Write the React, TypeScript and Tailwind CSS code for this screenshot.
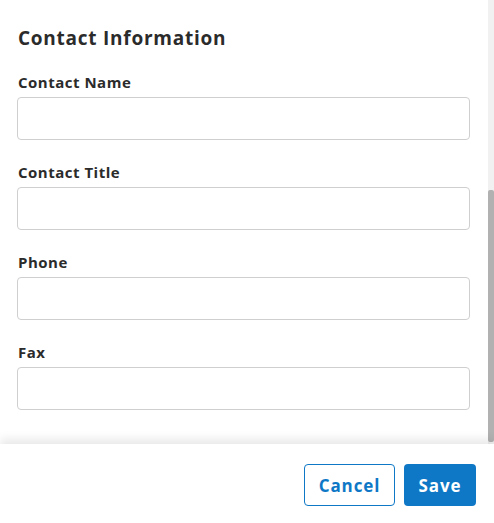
import React from 'react';

const fields = ['Contact Name', 'Contact Title', 'Phone', 'Fax'];

export default function App() {
  return (
    <div
      className="relative flex h-[523px] w-[494px] flex-col overflow-hidden bg-white text-[#2b2b2b]"
      style={{ fontFamily: '"Open Sans", Arial, sans-serif' }}
    >
      {/* scrollable body */}
      <div className="relative h-[444px] shrink-0 overflow-hidden pl-[17px] pr-[24px]">
        <h2 className="mt-[26px] pl-[1px] text-[19px] font-bold leading-[24px] tracking-[0.75px]">Contact Information</h2>
        <div className="mt-[20px]">
          {fields.map((f) => (
            <div key={f} className="pb-[20px]">
              <label className="block pl-[1px] text-[15px] font-bold leading-[24px] tracking-[0.5px]">{f}</label>
              <input
                type="text"
                className="mt-[3px] block h-[43px] w-[453px] rounded-[4px] border border-[#cfcfcf] bg-white px-3 outline-none"
              />
            </div>
          ))}
        </div>
        {/* scrollbar */}
        <div className="absolute right-0 top-0 h-full w-[6px] bg-[#f1f1f1]">
          <div className="absolute left-0 top-[190px] h-[252px] w-[6px] rounded-[2px] bg-[#b1b1b1]" />
        </div>
      </div>

      {/* footer */}
      <div className="relative z-10 flex flex-1 items-center justify-end gap-[9px] bg-white pr-[18px] pt-[2px] shadow-[0_-5px_9px_rgba(0,0,0,0.09)]">
        <button className="h-[42px] w-[91px] rounded-[4px] border border-[#0e78c6] bg-white pt-[2px] text-[17px] font-bold tracking-[0.9px] text-[#0e78c6]">
          Cancel
        </button>
        <button className="h-[42px] w-[72px] rounded-[4px] bg-[#0e78c6] pt-[2px] text-[17px] font-bold tracking-[0.9px] text-white">
          Save
        </button>
      </div>
    </div>
  );
}
